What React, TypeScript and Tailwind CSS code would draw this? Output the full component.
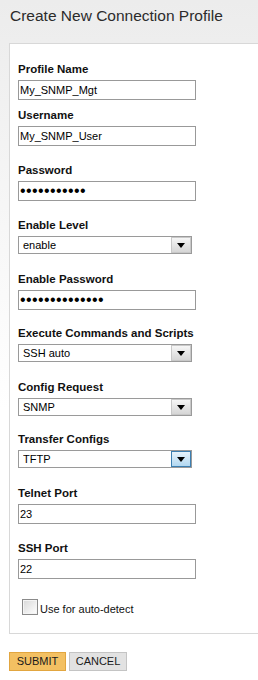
import React from 'react';

type Field =
  | { kind: 'text'; label: string; value: string; gap: string }
  | { kind: 'password'; label: string; value: string; gap: string }
  | { kind: 'select'; label: string; value: string; options: string[]; gap: string; active?: boolean };

const fields: Field[] = [
  { kind: 'text', label: 'Profile Name', value: 'My_SNMP_Mgt', gap: 'mt-0' },
  { kind: 'text', label: 'Username', value: 'My_SNMP_User', gap: 'mt-[8px]' },
  { kind: 'password', label: 'Password', value: 'xxxxxxxxxxx', gap: 'mt-[17px]' },
  { kind: 'select', label: 'Enable Level', value: 'enable', options: ['enable', 'disable'], gap: 'mt-[17px]' },
  { kind: 'password', label: 'Enable Password', value: 'xxxxxxxxxxxxxx', gap: 'mt-[18px]' },
  { kind: 'select', label: 'Execute Commands and Scripts', value: 'SSH auto', options: ['SSH auto', 'Telnet'], gap: 'mt-[16px]' },
  { kind: 'select', label: 'Config Request', value: 'SNMP', options: ['SNMP', 'CLI'], gap: 'mt-[18px]' },
  { kind: 'select', label: 'Transfer Configs', value: 'TFTP', options: ['TFTP', 'SCP'], gap: 'mt-[16px]', active: true },
  { kind: 'text', label: 'Telnet Port', value: '23', gap: 'mt-[18px]' },
  { kind: 'text', label: 'SSH Port', value: '22', gap: 'mt-[17px]' },
];

function SelectBox({ value, options, active }: { value: string; options: string[]; active?: boolean }) {
  return (
    <div className="relative w-[174px] h-[18px]">
      <select
        defaultValue={value}
        className="block w-full h-full appearance-none border border-[#9a9a9a] bg-white pl-[4px] text-[11px] leading-[16px] text-black outline-none"
      >
        {options.map((o) => (
          <option key={o}>{o}</option>
        ))}
      </select>
      {/* dropdown button */}
      <span
        className={
          active
            ? 'pointer-events-none absolute right-[1px] top-[1px] bottom-[1px] w-[20px] flex items-center justify-center border border-[#3c7fb1] bg-gradient-to-b from-[#e6f3fb] to-[#b2d8f1]'
            : 'pointer-events-none absolute right-[1px] top-[1px] bottom-[1px] w-[20px] flex items-center justify-center border border-[#c8c8c8] bg-gradient-to-b from-[#f6f6f6] to-[#d6d6d6]'
        }
      >
        <svg width="8" height="5" viewBox="0 0 8 5">
          <path d="M0 0H8L4 5Z" fill="#000" />
        </svg>
      </span>
    </div>
  );
}

export default function App() {
  return (
    <div
      className="w-[258px] min-h-[680px] overflow-hidden bg-gradient-to-b from-[#ececec] via-[#f6f6f6] via-30% to-white to-60% text-black"
      style={{ fontFamily: '"Liberation Sans", Arial, sans-serif' }}
    >
      {/* Title */}
      <h1 className="pl-[10px] pt-[6px] h-[43px] text-[15.5px] leading-[20px] font-normal text-[#2b2b2b]">
        Create New Connection Profile
      </h1>

      {/* Form panel */}
      <div className="ml-[9px] w-[270px] border border-[#d8d8d8] bg-white pl-[8px] pt-[18px] pb-[18px]">
        {fields.map((f) => (
          <div key={f.label} className={f.gap}>
            <label className="block h-[14px] text-[11.5px] leading-[14px] font-bold text-[#111]">{f.label}</label>
            <div className="mt-[4px]">
              {f.kind === 'select' ? (
                <SelectBox value={f.value} options={f.options} active={f.active} />
              ) : f.kind === 'password' ? (
                <input
                  type="password"
                  defaultValue={f.value}
                  className="block w-[178px] h-[20px] border border-[#999] bg-white px-[1px] text-[16px] tracking-[0.4px] leading-[18px] text-black outline-none"
                />
              ) : (
                <input
                  type="text"
                  defaultValue={f.value}
                  className="block w-[178px] h-[20px] border border-[#999] bg-white px-[1px] text-[11px] leading-[18px] text-black outline-none"
                />
              )}
            </div>
          </div>
        ))}

        <label className="mt-[20px] ml-[4px] flex items-end h-[16px] gap-[2px] text-[11px] leading-[14px] text-[#111]">
          <input
            type="checkbox"
            className="appearance-none w-[16px] h-[16px] border border-[#8a8a8a] bg-gradient-to-br from-[#d8d8d8] to-white shadow-[inset_0_0_0_1px_#f4f4f4]"
          />
          <span className="mb-[-1px]">Use for auto-detect</span>
        </label>
      </div>

      {/* Buttons */}
      <div className="mt-[18px] ml-[9px] flex gap-[3px]">
        <button className="w-[57px] h-[19px] border border-[#e2a640] bg-[#f3c062] text-[11px] leading-[17px] text-[#1a1a1a]">
          SUBMIT
        </button>
        <button className="w-[58px] h-[19px] border border-[#c4c4c4] bg-[#e2e2e2] text-[11px] leading-[17px] text-[#1a1a1a]">
          CANCEL
        </button>
      </div>
    </div>
  );
}
